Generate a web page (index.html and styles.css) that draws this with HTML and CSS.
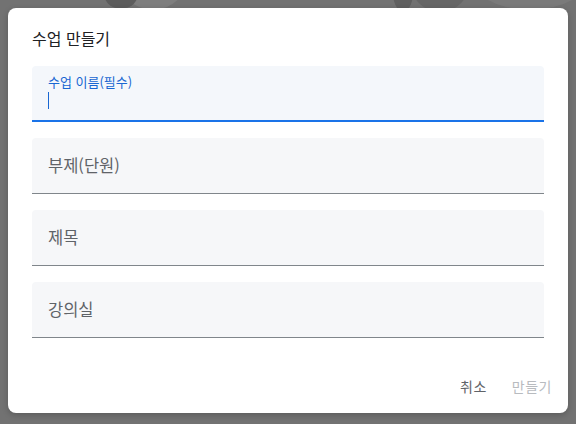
FILE: index.html
```html
<!DOCTYPE html>
<html lang="ko">
<head>
<meta charset="utf-8">
<link rel="stylesheet" href="styles.css">
</head>
<body>
<div class="backdrop">
  <span class="blob blob-a"></span>
  <span class="blob blob-b"></span>
  <span class="blob blob-c"></span>
  <span class="blob blob-d"></span>
  <span class="blob blob-e"></span>
</div>
<div class="dialog">
  <h2 class="title">수업 만들기</h2>
  <div class="fields">
    <div class="field focused">
      <span class="float-label">수업 이름(필수)</span>
      <span class="caret"></span>
    </div>
    <div class="field"><span class="label">부제(단원)</span></div>
    <div class="field"><span class="label">제목</span></div>
    <div class="field"><span class="label">강의실</span></div>
  </div>
  <div class="actions">
    <button class="btn">취소</button>
    <button class="btn disabled">만들기</button>
  </div>
</div>
</body>
</html>
```
FILE: styles.css
```css
* { box-sizing: border-box; }
html, body { margin: 0; height: 100%; }
body {
  background: #727272;
  padding: 8px;
  font-family: "Noto Sans CJK KR", "Noto Sans", Roboto, sans-serif;
  position: relative;
  overflow: hidden;
}
.backdrop { position: absolute; inset: 0; overflow: hidden; }
.blob { position: absolute; border-radius: 50%; }
.blob-a { left: 118px; top: -60px; width: 70px; height: 70px; background: #7e7e7e; }
.blob-b { left: 104px; top: -30px; width: 34px; height: 38px; background: #5c5c5c; border-radius: 40%; }
.blob-c { left: 392px; top: -40px; width: 22px; height: 52px; background: #5f5f5f; }
.blob-d { left: 410px; top: -50px; width: 60px; height: 62px; background: #666; }
.blob-e { left: 470px; top: -60px; width: 120px; height: 70px; background: #7a7a7a; }

.dialog {
  position: relative;
  width: 560px;
  height: 405px;
  background: #fff;
  border-radius: 8px;
  box-shadow: 0 2px 6px rgba(0,0,0,.2);
  padding: 18px 24px 9px;
  display: flex;
  flex-direction: column;
}
.title {
  margin: 0 0 16px;
  font-size: 16px;
  line-height: 24px;
  font-weight: 400;
  color: #202124;
}
.fields { display: flex; flex-direction: column; gap: 16px; }
.field {
  height: 56px;
  background: #f6f7f9;
  border-bottom: 1px solid #80868b;
  border-radius: 4px 4px 0 0;
  padding: 0 16px;
  display: flex;
  flex-direction: column;
  justify-content: center;
}
.label { font-size: 16.5px; line-height: 20px; color: #5f6368; margin-top: -2px; }
.field.focused {
  background: #f4f7fb;
  border-bottom: 2px solid #1a73e8;
  justify-content: flex-start;
  padding-top: 8px;
}
.float-label { font-size: 13px; line-height: 16px; color: #1967d2; }
.caret { display: block; width: 1px; height: 17px; background: #1967d2; margin-top: 2px; }
.actions {
  margin-top: auto;
  display: flex;
  justify-content: flex-end;
  gap: 9px;
  margin-right: -16px;
}
.btn {
  font-family: inherit;
  font-size: 14px;
  line-height: 20px;
  height: 36px;
  padding: 0 8px;
  border: 0;
  background: transparent;
  color: #5f6368;
  letter-spacing: 0.5px;
}
.btn.disabled { color: #b8bbbf; }
```
